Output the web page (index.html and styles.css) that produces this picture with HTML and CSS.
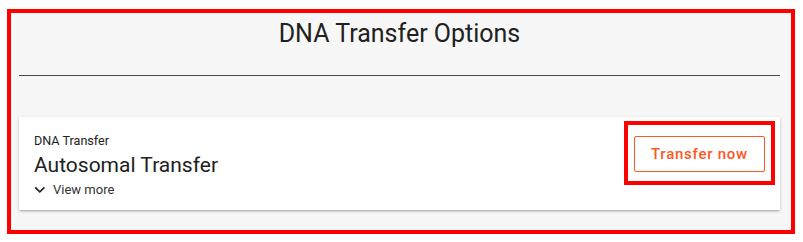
FILE: index.html
```html
<!DOCTYPE html>
<html lang="en">
<head>
<meta charset="utf-8">
<title>DNA Transfer Options</title>
<link rel="stylesheet" href="styles.css">
</head>
<body>
<div class="frame">
  <h1 class="title">DNA Transfer Options</h1>
  <div class="rule"></div>
  <div class="card">
    <div class="card-main">
      <div class="eyebrow">DNA Transfer</div>
      <div class="heading">Autosomal Transfer</div>
      <div class="more">
        <svg class="chev" width="12" height="20" viewBox="0 0 12 20" aria-hidden="true">
          <polyline points="1.2,7.4 5.8,11.8 10.4,7.4" fill="none" stroke="#222" stroke-width="1.7"/>
        </svg>
        <span>View more</span>
      </div>
    </div>
    <div class="highlight">
      <button class="btn" type="button">Transfer now</button>
    </div>
  </div>
</div>
</body>
</html>
```
FILE: styles.css
```css
* { box-sizing: border-box; }
html, body { margin: 0; padding: 0; background: #ffffff; }
body { font-family: Roboto, "Noto Sans", "Liberation Sans", sans-serif; }

.frame {
  margin: 9px 8px 0 7px;
  width: 788px;
  border: 4px solid #ff0000;
  background: #f7f7f7;
  padding: 0 11px 20px 8px;
}

.title {
  margin: 5px 0 0 0;
  font-size: 25px;
  line-height: 32px;
  font-weight: 400;
  color: #212121;
  text-align: center;
}

.rule {
  margin-top: 25px;
  height: 1px;
  background: #4a4a4a;
}

.card {
  margin-top: 41px;
  background: #ffffff;
  display: flex;
  justify-content: space-between;
  align-items: flex-start;
  padding: 4px 5px 10px 15px;
  box-shadow: 0 2px 2px -1px rgba(0,0,0,.18), 0 1px 2px 0 rgba(0,0,0,.12), 0 1px 4px 0 rgba(0,0,0,.1);
}

.card-main { padding-top: 12px; }

.eyebrow {
  font-size: 12.6px;
  line-height: 16px;
  color: #222;
}

.heading {
  margin-top: 4px;
  font-size: 21px;
  line-height: 24px;
  color: #212121;
}

.more {
  margin-top: 3px;
  display: flex;
  align-items: center;
  gap: 7px;
  height: 20px;
  font-size: 13px;
  line-height: 20px;
  color: #333;
}

.chev { display: block; }

.highlight {
  border: 4px solid #ff0000;
  padding: 11px 6px 9px 6px;
}

.btn {
  display: block;
  width: 131px;
  height: 36px;
  border: 1px solid #ff5722;
  border-radius: 2px;
  background: #ffffff;
  color: #ff5722;
  font-family: Roboto, "Noto Sans", "Liberation Sans", sans-serif;
  font-size: 15px;
  font-weight: 500;
  letter-spacing: 0.75px;
  padding: 0;
  cursor: pointer;
}
```
